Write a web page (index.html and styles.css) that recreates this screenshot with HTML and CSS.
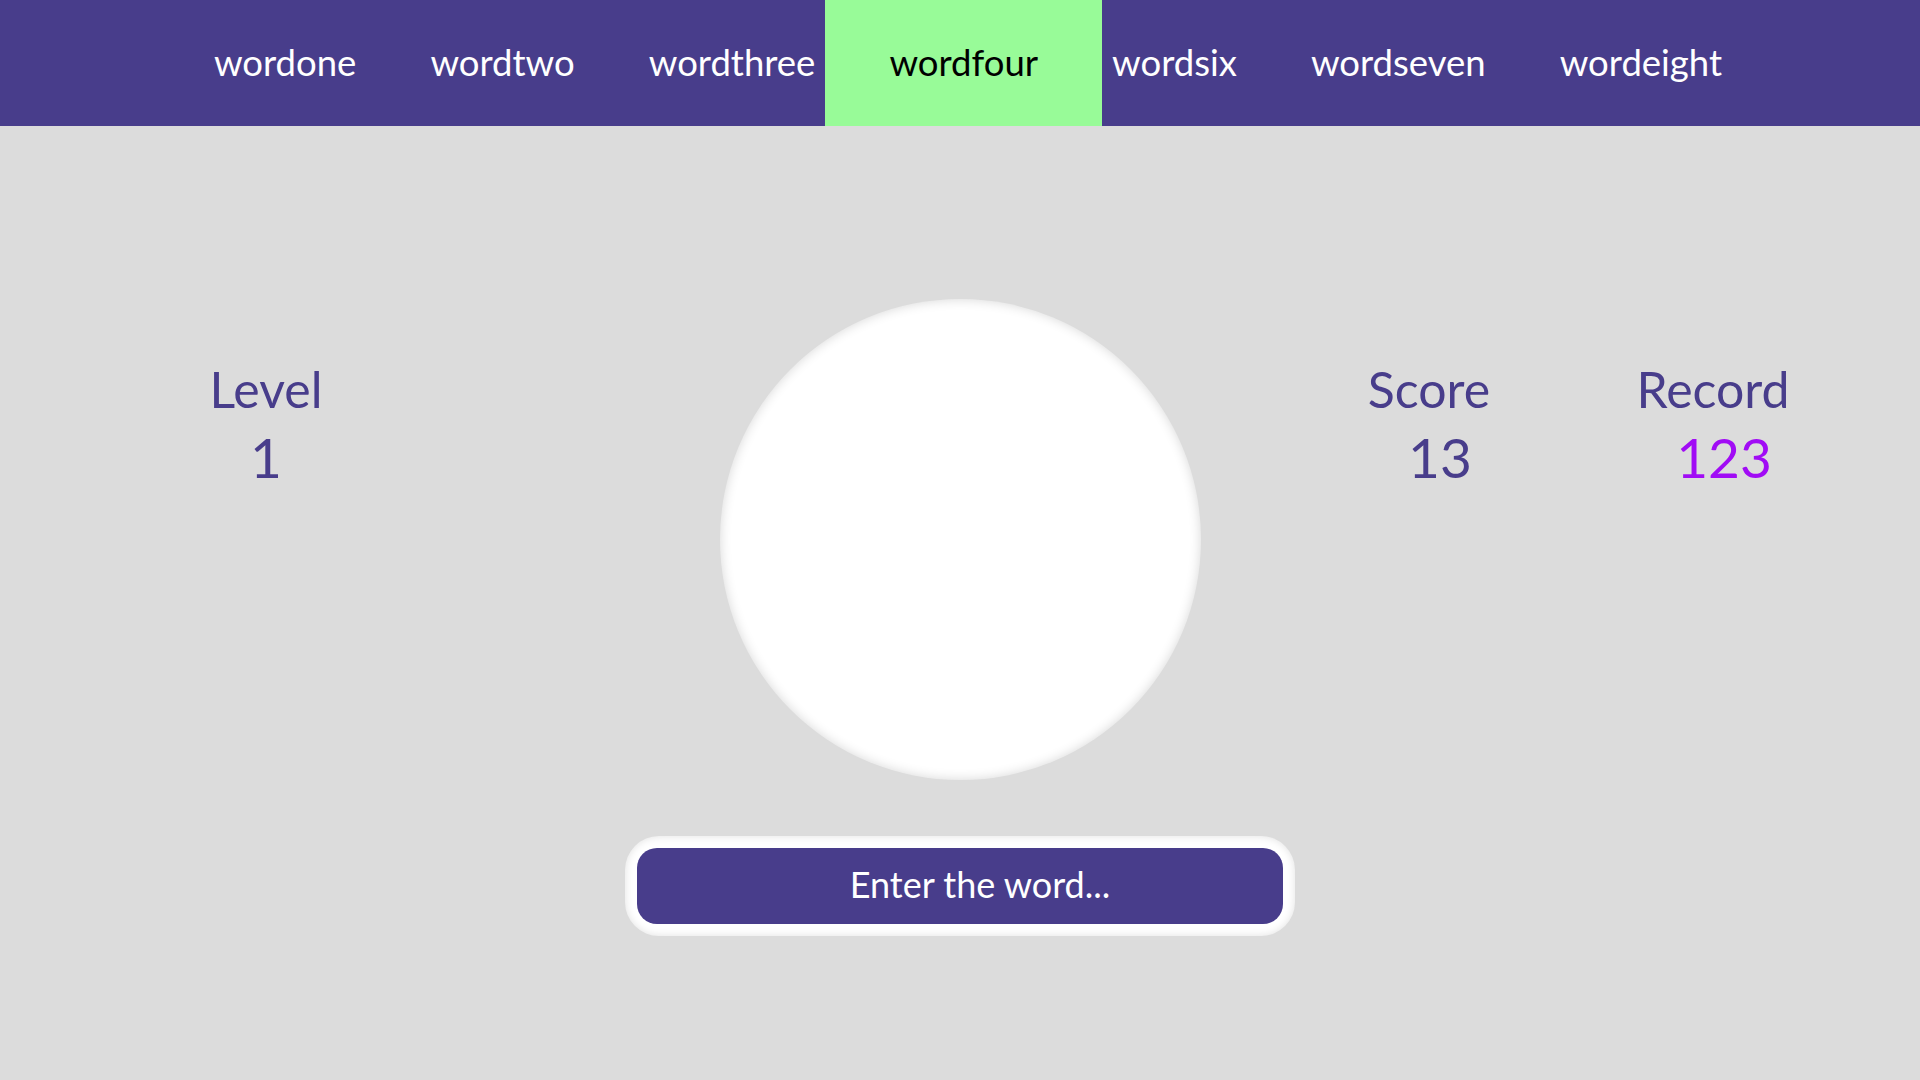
FILE: index.html
```html
<!DOCTYPE html>
<html lang="en">
<head>
<meta charset="utf-8">
<title>Word game</title>
<link rel="stylesheet" href="styles.css">
</head>
<body>
<nav class="topnav">
  <a class="topnav__item" href="#">wordone</a>
  <a class="topnav__item" href="#">wordtwo</a>
  <a class="topnav__item" href="#">wordthree</a>
  <a class="topnav__item topnav__item--active" href="#">wordfour</a>
  <a class="topnav__item" href="#">wordsix</a>
  <a class="topnav__item" href="#">wordseven</a>
  <a class="topnav__item" href="#">wordeight</a>
</nav>
<main class="game">
  <section class="board">
    <div class="board__left">
      <div class="stat">
        <div class="stat__label">Level</div>
        <div class="stat__value">1</div>
      </div>
    </div>
    <div class="bubble"></div>
    <div class="board__right">
      <div class="stat">
        <div class="stat__label">Score</div>
        <div class="stat__value stat__value--shift">13</div>
      </div>
      <div class="stat">
        <div class="stat__label">Record</div>
        <div class="stat__value stat__value--shift stat__value--record">123</div>
      </div>
    </div>
  </section>
  <div class="entry">
    <input class="entry__field" type="text" placeholder="Enter the word...">
  </div>
</main>
</body>
</html>
```

FILE: styles.css
```css
html, body {
  margin: 0;
  padding: 0;
}
body {
  background: #dcdcdc;
  font-family: Lato, "Open Sans", sans-serif;
  width: 1920px;
  height: 1080px;
  overflow: hidden;
}
.topnav {
  height: 126px;
  background: #483d8b;
  display: flex;
  justify-content: center;
  align-items: stretch;
  padding-left: 16px;
}
.topnav__item {
  display: flex;
  align-items: center;
  padding: 0 37px;
  color: #ffffff;
  text-decoration: none;
  font-size: 36.5px;
  line-height: 1;
  padding-bottom: 2px;
}
.topnav__item--active {
  background: #98fb98;
  color: #000000;
  padding: 0 64px 2px;
  margin: 0 -27px;
}
.game {
  padding-top: 173px;
  display: flex;
  flex-direction: column;
  align-items: center;
}
.board {
  width: 100%;
  display: grid;
  grid-template-columns: 1fr 480px 1fr;
  align-items: start;
}
.board__left {
  padding-left: 166px;
  margin-top: 60px;
  display: flex;
}
.board__right {
  padding-left: 129px;
  margin-top: 60px;
  display: flex;
  gap: 84px;
}
.stat {
  width: 200px;
  text-align: center;
  color: #483d8b;
}
.stat__label {
  font-size: 50px;
  line-height: 60px;
}
.stat__value {
  font-size: 55px;
  line-height: 76px;
}
.stat__value--shift {
  padding-left: 22px;
}
.stat__value--record {
  color: #a10cf5;
}
.bubble {
  width: 481px;
  height: 481px;
  border-radius: 50%;
  background: #ffffff;
  box-shadow: inset 0 0 12px rgba(0, 0, 0, 0.16);
}
.entry {
  margin-top: 56px;
  width: 646px;
  padding: 12px;
  background: #ffffff;
  border-radius: 34px;
  box-shadow: inset 0 0 9px rgba(0, 0, 0, 0.12);
}
.entry__field {
  display: block;
  box-sizing: border-box;
  width: 100%;
  height: 76px;
  border: none;
  outline: none;
  border-radius: 20px;
  background: #483d8b;
  color: #ffffff;
  font-family: Lato, "Open Sans", sans-serif;
  font-size: 36px;
  text-align: center;
  padding: 0 0 4px 40px;
}
.entry__field::placeholder {
  color: #ffffff;
  opacity: 1;
}
```
